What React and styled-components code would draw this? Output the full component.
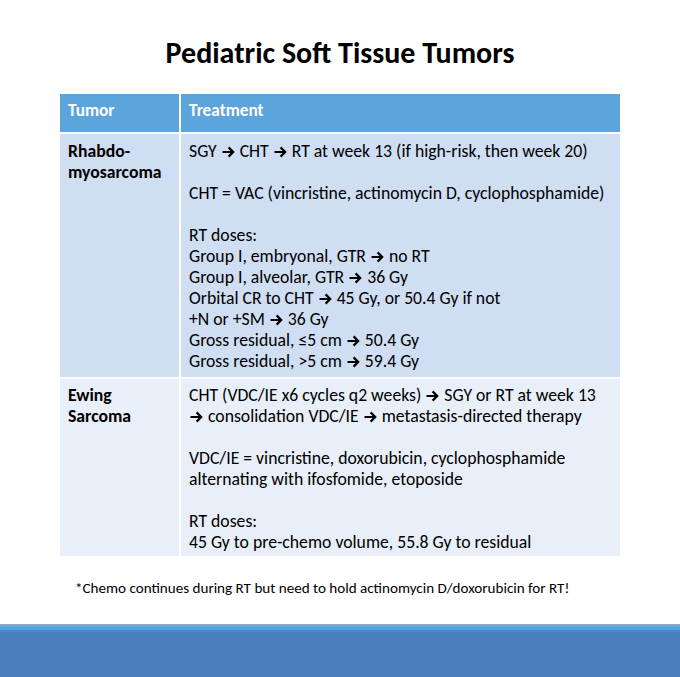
import React from "react";
import styled, { createGlobalStyle } from "styled-components";

const GlobalStyle = createGlobalStyle`
  html, body {
    margin: 0;
    padding: 0;
    background: #ffffff;
  }
  body {
    font-family: Carlito, Lato, "Liberation Sans", sans-serif;
    color: #000000;
  }
`;

const Slide = styled.div`
  width: 680px;
  height: 677px;
  display: flex;
  flex-direction: column;
  overflow: hidden;
`;

const Title = styled.h1`
  margin: 0;
  padding-top: 35px;
  height: 94px;
  box-sizing: border-box;
  text-align: center;
  font-size: 30px;
  line-height: 36px;
  font-weight: 700;
`;

const Table = styled.div`
  margin: 0 60px;
  display: grid;
  grid-template-columns: 119px 1fr;
  column-gap: 2px;
  row-gap: 2px;
`;

const HeadCell = styled.div`
  background: #5ba4dc;
  color: #ffffff;
  font-weight: 700;
  font-size: 17.3px;
  height: 38px;
  line-height: 34px;
  padding: 0 7px 0 8px;
`;

const Cell = styled.div`
  background: ${(p) => (p.$alt ? "#e8eff8" : "#cfdef2")};
  font-size: 17.7px;
  line-height: 21px;
  padding: ${(p) => p.$pad || "7px 7px 5px 8px"};
  font-weight: ${(p) => (p.$bold ? 700 : 400)};
  white-space: nowrap;
`;

const Line = styled.div`
  min-height: 21px;
`;

const ArrowSvg = styled.svg`
  display: inline-block;
  width: 13px;
  height: 12px;
  margin: 0 1px;
  vertical-align: -1px;
`;

const Arrow = () => (
  <ArrowSvg viewBox="0 0 13 12">
    <path
      d="M0.5 6 H11 M6.6 1.4 L11.2 6 L6.6 10.6"
      fill="none"
      stroke="#000"
      strokeWidth="2.2"
      strokeLinejoin="miter"
    />
  </ArrowSvg>
);

const Footnote = styled.p`
  margin: 0;
  padding: 22px 0 0 75px;
  font-size: 15.1px;
  line-height: 20px;
`;

const Spacer = styled.div`
  flex: 1;
`;

const BottomBar = styled.div`
  height: 52px;
  background: #4a80be;
  border-top: 1px solid #9aaabb;
  box-shadow: inset 0 2px 0 #5caee6, inset 0 5px 0 #5aa5dc, inset 0 7px 0 #4b88c6;
`;

const A = Arrow;

export default function App() {
  return (
    <>
      <GlobalStyle />
      <Slide>
        <Title>Pediatric Soft Tissue Tumors</Title>
        <Table>
          <HeadCell>Tumor</HeadCell>
          <HeadCell>Treatment</HeadCell>

          <Cell $bold>
            <Line>Rhabdo-</Line>
            <Line>myosarcoma</Line>
          </Cell>
          <Cell>
            <Line>
              SGY <A /> CHT <A /> RT at week 13 (if high-risk, then week 20)
            </Line>
            <Line />
            <Line>CHT = VAC (vincristine, actinomycin D, cyclophosphamide)</Line>
            <Line />
            <Line>RT doses:</Line>
            <Line>
              Group I, embryonal, GTR <A /> no RT
            </Line>
            <Line>
              Group I, alveolar, GTR <A /> 36 Gy
            </Line>
            <Line>
              Orbital CR to CHT <A /> 45 Gy, or 50.4 Gy if not
            </Line>
            <Line>
              +N or +SM <A /> 36 Gy
            </Line>
            <Line>
              Gross residual, ≤5 cm <A /> 50.4 Gy
            </Line>
            <Line>
              Gross residual, &gt;5 cm <A /> 59.4 Gy
            </Line>
          </Cell>

          <Cell $bold $alt $pad="6px 7px 3px 8px">
            <Line>Ewing</Line>
            <Line>Sarcoma</Line>
          </Cell>
          <Cell $alt $pad="6px 7px 3px 8px">
            <Line>
              CHT (VDC/IE x6 cycles q2 weeks) <A /> SGY or RT at week 13
            </Line>
            <Line>
              <A /> consolidation VDC/IE <A /> metastasis-directed therapy
            </Line>
            <Line />
            <Line>VDC/IE = vincristine, doxorubicin, cyclophosphamide</Line>
            <Line>alternating with ifosfomide, etoposide</Line>
            <Line />
            <Line>RT doses:</Line>
            <Line>45 Gy to pre-chemo volume, 55.8 Gy to residual</Line>
          </Cell>
        </Table>
        <Footnote>
          *Chemo continues during RT but need to hold actinomycin D/doxorubicin for RT!
        </Footnote>
        <Spacer />
        <BottomBar />
      </Slide>
    </>
  );
}
